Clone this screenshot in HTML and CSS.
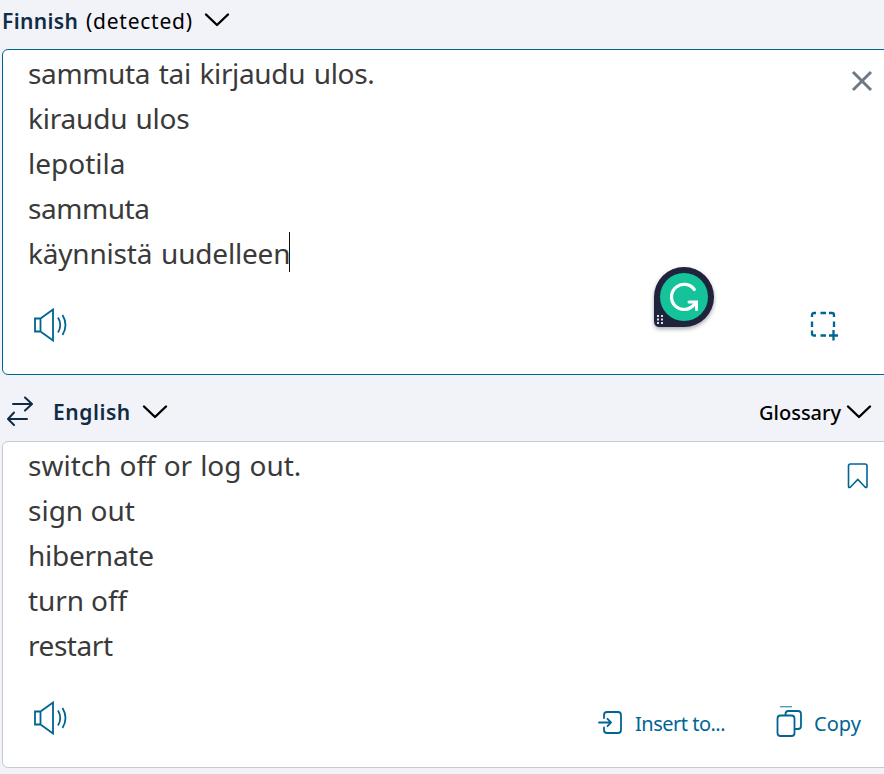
FILE: index.html
```html
<!DOCTYPE html>
<html lang="en">
<head>
<meta charset="utf-8">
<title>Translator</title>
<link rel="stylesheet" href="styles.css">
</head>
<body>
<header class="bar bar-source">
  <span class="lang lang-fi">Finnish</span><span class="detected">(detected)</span>
  <svg class="chev chev-fi" width="26" height="16" viewBox="0 0 26 16"><path d="M2 2.5 13 13 24 2.5"/></svg>
</header>
<section class="card source">
  <div class="text">
    <p><span class="s1">sammuta tai kirjaudu ulos.</span></p>
    <p><span class="s2">kiraudu ulos</span></p>
    <p><span class="s3">lepotila</span></p>
    <p><span class="s4">sammuta</span></p>
    <p><span class="s5">käynnistä uudelleen</span><i class="caret"></i></p>
  </div>
  <svg class="close" width="22" height="22" viewBox="0 0 22 22"><path d="M2 2 20 20M20 2 2 20"/></svg>
  <div class="tools">
    <svg class="speaker" width="36" height="34" viewBox="0 0 36 34"><path d="M2 10.5H7.500V23.500H2ZM7.500 10.500 20 1.500V32.500L7.500 23.500M25 9.500Q29.500 17 25 24.500M29.500 7Q35.500 17 29.500 27"/></svg>
    <svg class="capture" width="30" height="30" viewBox="0 0 30 30"><path d="M2 6V4Q2 2 4 2H6M10.500 2H16M19 2H22Q24 2 24 4V6M2 10.500V16M24 10.500V16M2 19.500V22.500Q2 24.500 4 24.500H6M10.500 24.500H16M23.500 19V29.500M19 24.500H28"/></svg>
  </div>
</section>
<header class="bar bar-target">
  <svg class="swap" width="28" height="30" viewBox="0 0 28 30"><path d="M7 8H26M19 1.500 26 8 19 14.500M21 23H2M8 16.500 2 23 8 29"/></svg>
  <span class="lang lang-en">English</span>
  <svg class="chev chev-en" width="26" height="16" viewBox="0 0 26 16"><path d="M2 2.5 13 13 24 2.5"/></svg>
  <span class="glossary">Glossary</span>
  <svg class="chev chev-gl" width="26" height="16" viewBox="0 0 26 16"><path d="M2 2.5 13 13 24 2.5"/></svg>
</header>
<section class="card target">
  <div class="text">
    <p><span class="t1">switch off or log out.</span></p>
    <p><span class="t2">sign out</span></p>
    <p><span class="t3">hibernate</span></p>
    <p><span class="t4">turn off</span></p>
    <p><span class="t5">restart</span></p>
  </div>
  <svg class="bookmark" width="22" height="28" viewBox="0 0 22 28"><path d="M1.500 4Q1.500 2 3.500 2H18Q20 2 20 4V24Q20 26.500 18 25L10.800 17.500 3.500 25Q1.500 26.500 1.500 24Z"/></svg>
  <div class="tools">
    <svg class="speaker" width="36" height="34" viewBox="0 0 36 34"><path d="M2 10.5H7.500V23.500H2ZM7.500 10.500 20 1.500V32.500L7.500 23.500M25 9.500Q29.500 17 25 24.500M29.500 7Q35.500 17 29.500 27"/></svg>
    <svg class="insert" width="26" height="26" viewBox="0 0 26 26"><path d="M6 8V5Q6 2 9 2H20Q23 2 23 5V20Q23 23 20 23H9Q6 23 6 20V17.500M1 12.500H13M9.500 8.800 13 12.500 9.500 16.200"/></svg>
    <span class="action insert-label">Insert to...</span>
    <svg class="copy" width="28" height="32" viewBox="0 0 28 32"><path d="M4 .5H16" opacity=".65"/><path d="M4.500 9.500H15.500Q18.500 9.500 18.500 12.500V27Q18.500 30 15.500 30H4.500Q1.500 30 1.500 27V12.500Q1.500 9.500 4.500 9.500ZM9.500 9V8Q9.500 5 12.500 5H22Q25 5 25 8V20Q25 23 22 23H19"/></svg>
    <span class="action copy-label">Copy</span>
  </div>
</section>
<div class="assistant">
  <svg width="60" height="60" viewBox="0 0 60 60"><path fill="#1f243c" d="M30 0A30 30 0 0 1 30 60H6Q0 60 0 54V30A30 30 0 0 1 30 0Z"/><circle cx="30" cy="30" r="24" fill="#15c39a"/><path fill="none" stroke="#fff" stroke-width="3.200" stroke-linecap="round" d="M40.300 22.500A12.600 12.600 0 1 0 38.500 39.300L42 35.500"/><path fill="none" stroke="#fff" stroke-width="3" stroke-linecap="round" d="M35 35H42.500V42.500"/><path fill="#dfe1e8" d="M3 48h2v2H3zM7 48h2v2H7zM3 51.500h2v2H3zM7 51.500h2v2H7zM3 55h2v2H3zM7 55h2v2H7z"/></svg>
</div>
</body>
</html>
```
FILE: styles.css
```css
* { box-sizing: border-box; }
body {
  margin: 0;
  width: 884px;
  height: 774px;
  overflow: hidden;
  background: #f2f3f8;
  font-family: "Noto Sans", "Open Sans", sans-serif;
  color: #3a3a3a;
}
svg { display: block; flex: none; fill: none; stroke: #006494; stroke-width: 1.8; }
.bar { display: flex; align-items: center; white-space: nowrap; }
.bar-source { height: 49px; padding: 0 0 8px 2px; font-size: 21px; color: #000; }
.bar-target { height: 66px; padding: 8px 12px 0 6px; font-size: 21px; color: #000; }
.lang { font-weight: 600; color: #0f2b46; }
.lang-fi { width: 84px; letter-spacing: .35px; }
.detected { width: 118px; letter-spacing: .75px; }
.chev { stroke: #000; stroke-width: 2.4; stroke-linecap: round; stroke-linejoin: round; }
.chev-fi { margin-bottom: 1px; }
.swap { stroke: #0f2b46; stroke-width: 2; stroke-linecap: round; stroke-linejoin: round; margin-bottom: 2px; }
.lang-en { width: 89px; margin-left: 19px; letter-spacing: .55px; }
.glossary { width: 87px; margin-left: auto; font-weight: 500; font-size: 20px; }
.card {
  position: relative;
  display: flex;
  flex-direction: column;
  margin-left: 2px;
  width: 900px;
  height: 326px;
  border: 1px solid #c3cad4;
  border-radius: 6px;
  background: #fff;
}
.source { border-color: #006494; }
.target { height: 327px; }
.text { padding: 1px 0 0 25px; font-size: 28px; line-height: 45px; white-space: nowrap; }
.text p { display: flex; align-items: center; margin: 0; height: 45px; }
.s1 { letter-spacing: -.35px; word-spacing: 1.7px; }
.s2 { letter-spacing: -.2px; word-spacing: 1px; }
.s4 { letter-spacing: -.45px; }
.s5 { letter-spacing: -.2px; word-spacing: 1.8px; }
.t1 { word-spacing: .7px; }
.t3 { letter-spacing: -.25px; }
.t4 { letter-spacing: -.1px; }
.t5 { letter-spacing: -.45px; }
.caret { width: 1px; height: 40px; margin: 0 0 4px -1px; background: #111; }
.close { position: absolute; left: 848px; top: 20px; stroke: #6f7983; stroke-width: 3; }
.bookmark { position: absolute; left: 844px; top: 20px; stroke-width: 1.6; }
.tools { display: flex; height: 96px; padding: 32px 0 0 30px; align-items: flex-start; }
.target .tools { padding-top: 33px; }
.capture { margin: 3px 0 0 741px; stroke-width: 2.3; }
.insert { margin: 9px 0 0 529px; stroke-linecap: round; }
.copy { margin: 5px 0 0 50px; }
.action { margin-top: 8px; font-size: 20px; line-height: 30px; color: #006494; white-space: nowrap; }
.insert-label { width: 91px; margin-left: 11px; letter-spacing: -.5px; }
.copy-label { margin-left: 10px; }
.assistant { position: absolute; left: 654px; top: 267px; filter: drop-shadow(0 2px 2px rgba(31, 36, 60, .4)); }
.assistant svg { stroke: none; }
```
